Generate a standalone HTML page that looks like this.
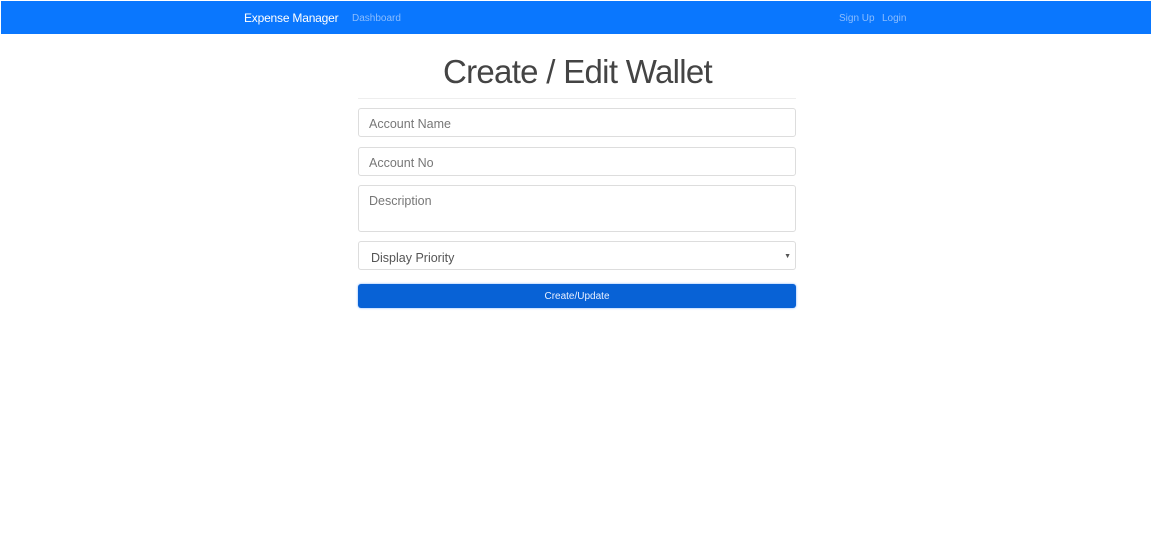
<!DOCTYPE html>
<html><head><style>
body{margin:0;background:#fff;font-family:"Liberation Sans",sans-serif;width:1155px;height:555px;overflow:hidden;position:relative}
.nav{position:absolute;left:1px;top:1px;width:1150px;height:33px;background:#0a77fe}
.nav span{position:absolute;top:10px;font-size:12px}
.brand{left:243px;color:#fff;font-size:12px!important;top:10px!important;letter-spacing:-.2px}
.l{color:#8cbdfd;font-size:10px!important;top:12px!important}
h1{position:absolute;left:0;width:1155px;top:53px;margin:0;text-align:center;font-weight:300;font-size:33px;color:#444;letter-spacing:-.7px}
.hr{position:absolute;left:358px;width:438px;top:98px;height:1px;background:#eee}
.f{position:absolute;left:358px;border:1px solid #ddd;border-radius:3px;color:#777;font-size:12.5px;box-sizing:border-box;width:438px;padding-left:10px;line-height:31px}
.btn{position:absolute;left:358px;width:438px;top:284px;height:24px;background:#0862d6;border-radius:3px;color:#e8f0ff;font-size:10px;text-align:center;line-height:26px;box-shadow:0 0 2px #7ab0ff}
</style></head><body>
<div class="nav"><span class="brand">Expense Manager</span><span class="l" style="left:351px">Dashboard</span><span class="l" style="left:838px">Sign Up</span><span class="l" style="left:881px">Login</span></div>
<h1>Create / Edit Wallet</h1>
<div class="hr"></div>
<div class="f" style="top:108px;height:29px">Account Name</div>
<div class="f" style="top:147px;height:29px">Account No</div>
<div class="f" style="top:185px;height:47px;line-height:30px">Description</div>
<div class="f" style="top:241px;height:29px;color:#555;padding-left:12px;line-height:32px">Display Priority<span style="position:absolute;right:4px;font-size:7px;line-height:29px">▼</span></div>
<div class="btn">Create/Update</div>
</body></html>
